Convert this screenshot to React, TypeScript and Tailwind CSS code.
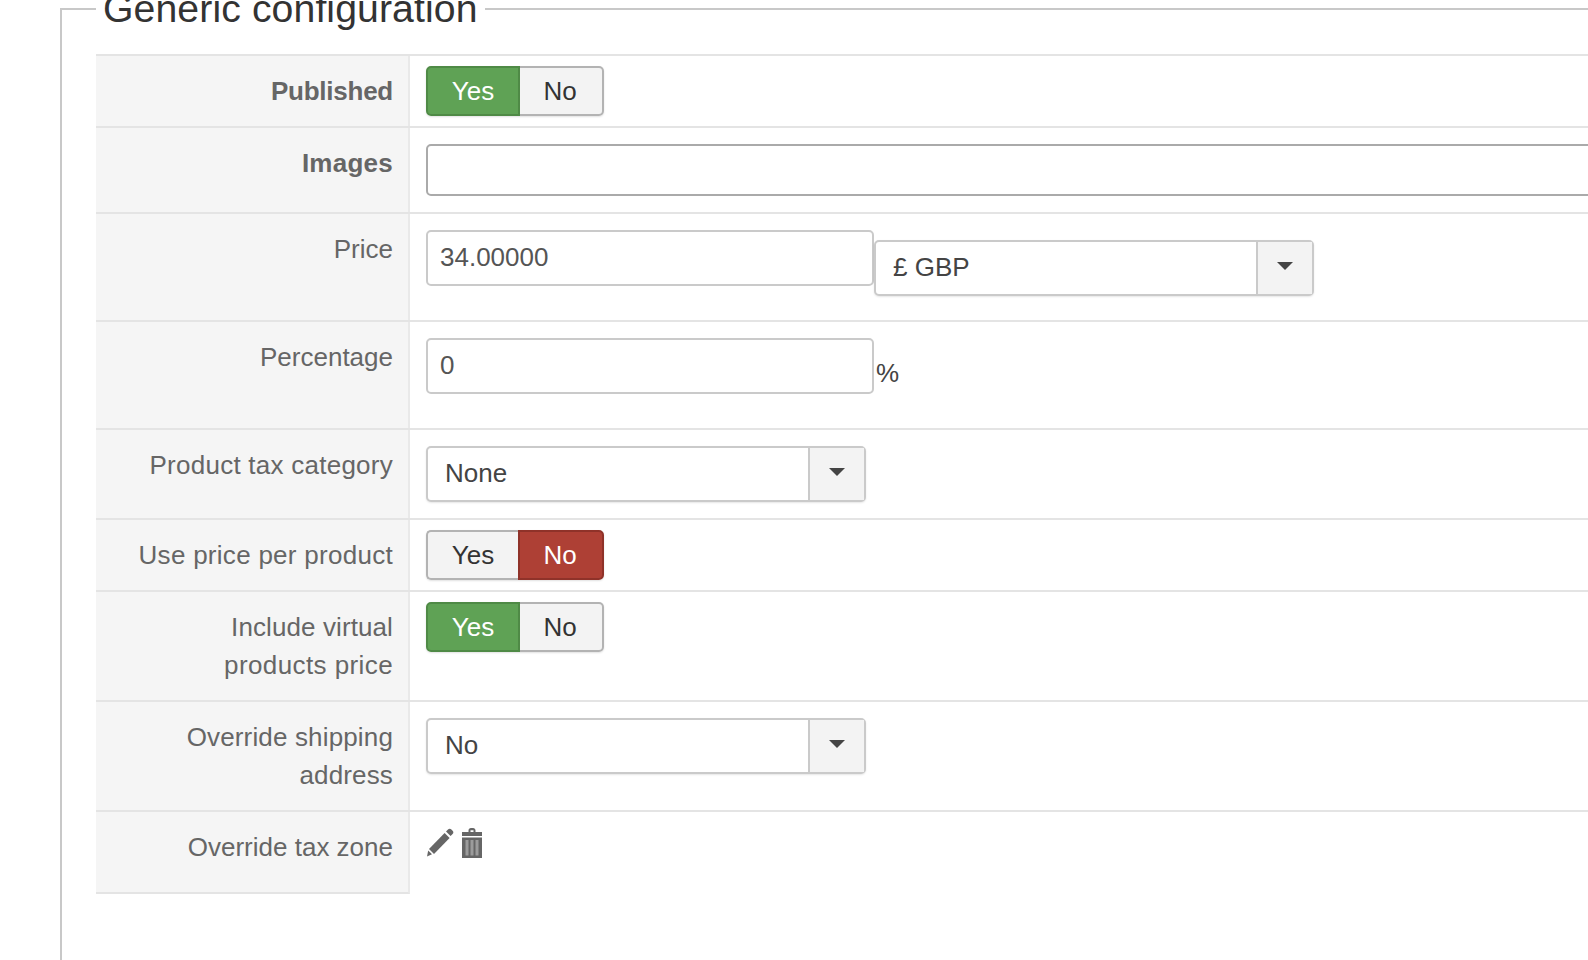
function Toggle({ value }: { value: "yes" | "no" }) {
  const isYes = value === "yes";
  return (
    <div className="flex h-[50px] w-[178px] rounded-[5px] text-[26px] leading-none shadow-[0_1px_2px_rgba(0,0,0,0.12)]">
      <div
        className={
          isYes
            ? "flex w-[94px] items-center justify-center rounded-l-[5px] border-2 border-[#4f8a46] bg-[#5fa255] text-white"
            : "flex w-[92px] items-center justify-center rounded-l-[5px] border-2 border-r-0 border-[#b3b3b3] bg-[#f3f3f3] text-[#333]"
        }
      >
        Yes
      </div>
      <div
        className={
          isYes
            ? "flex flex-1 items-center justify-center rounded-r-[5px] border-2 border-l-0 border-[#b3b3b3] bg-[#f3f3f3] pr-[2px] text-[#333]"
            : "flex flex-1 items-center justify-center rounded-r-[5px] border-2 border-[#8f3229] bg-[#ae4035] pr-[2px] text-white"
        }
      >
        No
      </div>
    </div>
  );
}

function Dropdown({ value, className }: { value: string; className: string }) {
  return (
    <div
      className={`flex h-[56px] items-stretch rounded-[5px] border-2 border-[#cacaca] bg-white text-[26px] text-[#444] shadow-[0_1px_2px_rgba(0,0,0,0.1)] ${className}`}
    >
      <div className="flex flex-1 items-center pb-[2px] pl-[17px]">{value}</div>
      <div className="flex w-[56px] items-center justify-center border-l-2 border-[#cacaca] bg-[#f3f3f3] pb-[5px]">
        <div className="h-0 w-0 border-x-[8px] border-t-[8px] border-x-transparent border-t-[#444]" />
      </div>
    </div>
  );
}

function Row({
  label,
  bold,
  last,
  className,
  children,
}: {
  label: React.ReactNode;
  bold?: boolean;
  last?: boolean;
  className: string;
  children?: React.ReactNode;
}) {
  return (
    <div className={`flex border-t-2 border-[#e4e4e4] ${className}`}>
      <div
        className={`w-[314px] shrink-0 border-r-2 border-[#e9e9e9] bg-[#f5f5f5] pt-4 pr-[15px] text-right leading-[38px] text-[#666] ${
          bold ? "font-bold" : ""
        } ${last ? "border-b-2 border-b-[#e4e4e4]" : ""}`}
      >
        {label}
      </div>
      <div className="flex-1 pl-[16px]">{children}</div>
    </div>
  );
}

export default function App() {
  return (
    <div className="h-[960px] w-[1588px] overflow-hidden bg-white font-['Liberation_Sans',Arial,sans-serif] text-[26px] text-[#333]">
      <fieldset className="ml-[60px] mt-[-13px] h-[1100px] w-[1700px] border-2 border-[#c8c8c8] pl-[34px]">
        <legend className="px-[7px] text-[39.2px] leading-[44px] tracking-[0.1px] text-[#333]">
          Generic configuration
        </legend>
        <div className="mt-[23px]">
          <Row label={<span className="tracking-[-0.25px]">Published</span>} bold className="h-[72px]">
            <div className="pt-[10px]">
              <Toggle value="yes" />
            </div>
          </Row>
          <Row label={<span className="tracking-[0.25px]">Images</span>} bold className="h-[86px]">
            <div className="pt-4">
              <input
                readOnly
                className="block h-[52px] w-[1300px] rounded-[5px] border-2 border-[#aaaaaa] bg-white px-3"
              />
            </div>
          </Row>
          <Row label="Price" className="h-[108px]">
            <div className="flex items-start pt-4">
              <input
                readOnly
                value="34.00000"
                className="block h-[56px] w-[448px] rounded-[5px] border-2 border-[#cacaca] bg-white px-3 pb-[2px] text-[#555]"
              />
              <Dropdown value="£ GBP" className="mt-[10px] w-[440px]" />
            </div>
          </Row>
          <Row label="Percentage" className="h-[108px]">
            <div className="flex items-start gap-[2px] pt-4">
              <input
                readOnly
                value="0"
                className="block h-[56px] w-[448px] rounded-[5px] border-2 border-[#cacaca] bg-white px-3 pb-[2px] text-[#555]"
              />
              <span className="pt-[16px] leading-[38px] text-[#444]">%</span>
            </div>
          </Row>
          <Row label={<span className="tracking-[0.25px]">Product tax category</span>} className="h-[90px]">
            <div className="pt-4">
              <Dropdown value="None" className="w-[440px]" />
            </div>
          </Row>
          <Row label={<span className="tracking-[0.28px]">Use price per product</span>} className="h-[72px]">
            <div className="pt-[10px]">
              <Toggle value="no" />
            </div>
          </Row>
          <Row
            label={
              <>
                <span className="tracking-[0.1px]">Include virtual</span>
                <br />
                <span className="tracking-[0.4px]">products price</span>
              </>
            }
            className="h-[110px]"
          >
            <div className="pt-[10px]">
              <Toggle value="yes" />
            </div>
          </Row>
          <Row
            label={
              <span className="tracking-[0.15px]">
                Override shipping
                <br />
                address
              </span>
            }
            className="h-[110px]"
          >
            <div className="pt-4">
              <Dropdown value="No" className="w-[440px]" />
            </div>
          </Row>
          <Row label="Override tax zone" last className="h-[84px]">
            <div className="flex items-start gap-[8px] pt-4">
              <svg width="28" height="30" viewBox="0 0 28 30" fill="#666">
                <path d="M20 3.500l2-2c1-1 2.400-1 3.400 0l1.200 1.200c1 1 1 2.400 0 3.400l-2 2z" />
                <path d="M18.600 5l5 5L8 26l-5-5z" />
                <path d="M2.200 22.500l3.800 3.800-5 2.200z" />
              </svg>
              <svg width="20" height="30" viewBox="0 0 20 30" fill="#666">
                <path d="M6.500 4V2.500C6.500 1 7.500 0 9 0h2c1.500 0 2.500 1 2.500 2.500V4H20v4H0V4zM8.500 4h3V2.200h-3z" />
                <rect x="0" y="9.500" width="20" height="20.500" />
                <rect x="3.500" y="12" width="3" height="15.500" fill="#9c9c9c" />
                <rect x="8.500" y="12" width="3" height="15.500" fill="#9c9c9c" />
                <rect x="13.500" y="12" width="3" height="15.500" fill="#9c9c9c" />
              </svg>
            </div>
          </Row>
        </div>
      </fieldset>
    </div>
  );
}
